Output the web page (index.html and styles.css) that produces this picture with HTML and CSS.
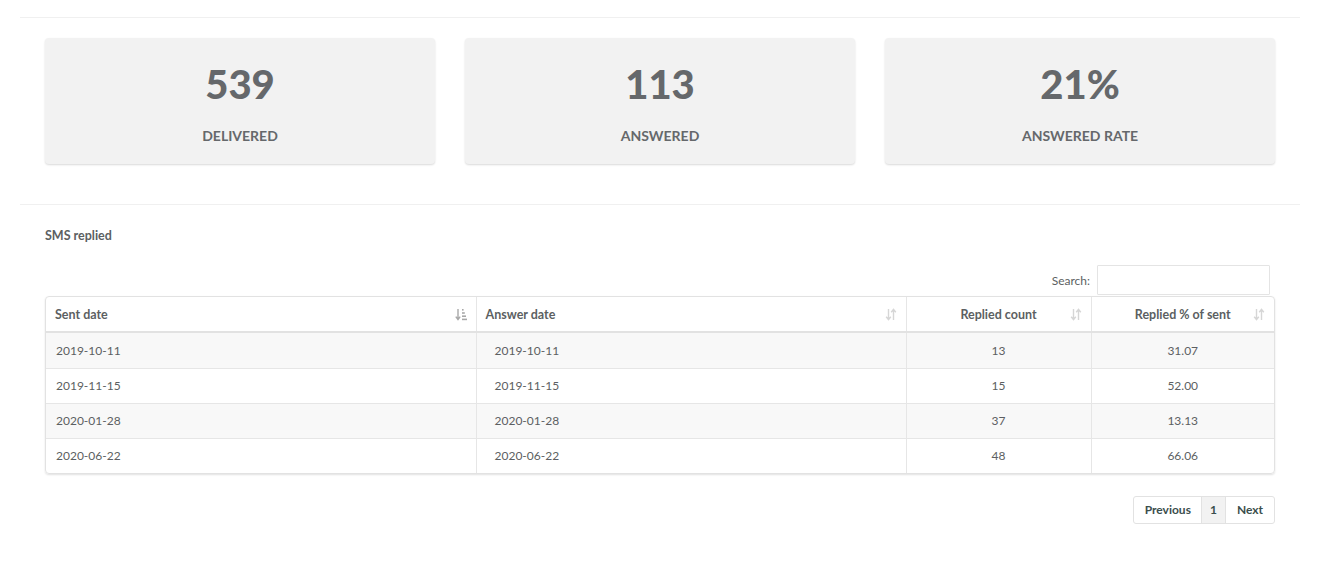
FILE: index.html
```html
<!DOCTYPE html>
<html>
<head>
<meta charset="utf-8">
<link rel="stylesheet" href="styles.css">
</head>
<body>
<div class="page">
  <div class="section top-section">
    <div class="stats">
      <div class="card"><div class="num">539</div><div class="label">DELIVERED</div></div>
      <div class="card"><div class="num">113</div><div class="label">ANSWERED</div></div>
      <div class="card"><div class="num">21%</div><div class="label">ANSWERED RATE</div></div>
    </div>
  </div>
  <div class="section table-section">
    <div class="title">SMS replied</div>
    <div class="search-row">
      <label class="search-label">Search:</label>
      <input class="search-input" type="text">
    </div>
    <div class="table-wrap">
      <table class="data">
        <thead>
          <tr>
            <th class="c1"><span class="th-in"><span>Sent date</span>
              <svg class="sort active" width="12" height="13" viewBox="0 0 12 13"><path d="M3 1v10.5M0.8 8.6L3 11.5 5.2 8.6" fill="none" stroke="currentColor" stroke-width="1.4"/><rect x="7" y="1" width="1.6" height="1.6" fill="currentColor"/><rect x="7" y="4.2" width="2.8" height="1.6" fill="currentColor"/><rect x="7" y="7.4" width="4" height="1.6" fill="currentColor"/><rect x="7" y="10.6" width="5" height="1.6" fill="currentColor"/></svg></span></th>
            <th class="c2"><span class="th-in"><span>Answer date</span>
              <svg class="sort" width="12" height="13" viewBox="0 0 12 13"><path d="M3.5 1v10.5M1.2 8.8L3.5 11.6 5.8 8.8M8.5 12V1.5M6.2 4.2L8.5 1.4 10.8 4.2" fill="none" stroke="currentColor" stroke-width="1.4"/></svg></span></th>
            <th class="c3"><span class="th-in center"><span>Replied count</span>
              <svg class="sort" width="12" height="13" viewBox="0 0 12 13"><path d="M3.5 1v10.5M1.2 8.8L3.5 11.6 5.8 8.8M8.5 12V1.5M6.2 4.2L8.5 1.4 10.8 4.2" fill="none" stroke="currentColor" stroke-width="1.4"/></svg></span></th>
            <th class="c4"><span class="th-in center"><span>Replied % of sent</span>
              <svg class="sort" width="12" height="13" viewBox="0 0 12 13"><path d="M3.5 1v10.5M1.2 8.8L3.5 11.6 5.8 8.8M8.5 12V1.5M6.2 4.2L8.5 1.4 10.8 4.2" fill="none" stroke="currentColor" stroke-width="1.4"/></svg></span></th>
          </tr>
        </thead>
        <tbody>
          <tr><td>2019-10-11</td><td class="ans">2019-10-11</td><td class="ctr">13</td><td class="ctr">31.07</td></tr>
          <tr><td>2019-11-15</td><td class="ans">2019-11-15</td><td class="ctr">15</td><td class="ctr">52.00</td></tr>
          <tr><td>2020-01-28</td><td class="ans">2020-01-28</td><td class="ctr">37</td><td class="ctr">13.13</td></tr>
          <tr><td>2020-06-22</td><td class="ans">2020-06-22</td><td class="ctr">48</td><td class="ctr">66.06</td></tr>
        </tbody>
      </table>
    </div>
    <div class="pager-row">
      <div class="pager">
        <span class="pg">Previous</span><span class="pg cur">1</span><span class="pg">Next</span>
      </div>
    </div>
  </div>
</div>
</body>
</html>
```

FILE: styles.css
```css
* { box-sizing: border-box; }
html, body { margin: 0; padding: 0; background: #fff; }
body {
  font-family: Lato, "Open Sans", "Liberation Sans", sans-serif;
  color: #5c5f62;
  font-size: 13px;
}
.page { padding: 17px 23px 0 20px; }
.section { border-top: 1px solid #f0f0f0; padding: 0 25px; }
.top-section { padding-top: 20px; padding-bottom: 40px; }
.stats {
  display: grid;
  grid-template-columns: repeat(3, 390px);
  column-gap: 30px;
}
.card {
  height: 126px;
  background: #f2f2f2;
  border-radius: 4px;
  box-shadow: 0 1px 2px rgba(0,0,0,0.15);
  text-align: center;
  padding-top: 19px;
}
.num {
  font-size: 40px;
  font-weight: 900;
  line-height: 54px;
  color: #65686b;
}
.label {
  margin-top: 15px;
  font-size: 14px;
  font-weight: 700;
  line-height: 20px;
  color: #65686b;
}
.table-section { padding-top: 22px; }
.title {
  font-size: 12.5px;
  font-weight: 700;
  line-height: 18px;
  color: #5c5f62;
}
.search-row {
  margin-top: 20px;
  display: flex;
  justify-content: flex-end;
  align-items: center;
  gap: 7px;
  padding-right: 5px;
}
.search-label { font-size: 12px; color: #5c5f62; }
.search-input {
  width: 173px;
  height: 30px;
  border: 1px solid #e4e4e4;
  border-radius: 1px;
  outline: none;
  margin: 0;
}
.table-wrap {
  margin-top: 1px;
  border: 1px solid #e2e2e2;
  border-radius: 4px;
  box-shadow: 0 1px 2px rgba(0,0,0,0.12);
  overflow: hidden;
}
table.data {
  width: 100%;
  border-collapse: collapse;
  table-layout: fixed;
}
th.c1 { width: 430px; }
th.c2 { width: 430px; }
th.c3 { width: 185px; }
th {
  height: 35px;
  padding: 0 9px 0 9px;
  font-size: 12.5px;
  font-weight: 700;
  text-align: left;
  color: #5c5f62;
  border-left: 1px solid #e6e6e6;
  border-bottom: 2px solid #e2e2e2;
}
th:first-child, td:first-child { border-left: none; }
.th-in { display: flex; align-items: center; justify-content: space-between; }
.th-in.center { justify-content: center; position: relative; }
.th-in.center .sort { position: absolute; right: 0; top: 50%; margin-top: -6px; }
.sort { color: #d6d6d6; }
.sort.active { color: #a8a8a8; }
td {
  height: 35px;
  padding: 0 10px;
  font-size: 12px;
  color: #5c5f62;
  border-left: 1px solid #e6e6e6;
  border-top: 1px solid #e6e6e6;
}
tbody tr:first-child td { border-top: none; height: 36px; }
tbody tr:nth-child(odd) td { background: #f8f8f8; }
td.ans { padding-left: 18px; }
td.ctr { text-align: center; }
.pager-row {
  margin-top: 22px;
  display: flex;
  justify-content: flex-end;
}
.pager { display: flex; border: 1px solid #e2e2e2; border-radius: 3px; overflow: hidden; }
.pg {
  height: 26px;
  line-height: 26px;
  padding: 0 11px;
  font-size: 12px;
  font-weight: 700;
  color: #3b4e4c;
  border-left: 1px solid #e2e2e2;
}
.pg:first-child { border-left: none; padding: 0 10px 0 11px; }
.pg.cur { background: #f2f2f2; padding: 0 8px; }
```
